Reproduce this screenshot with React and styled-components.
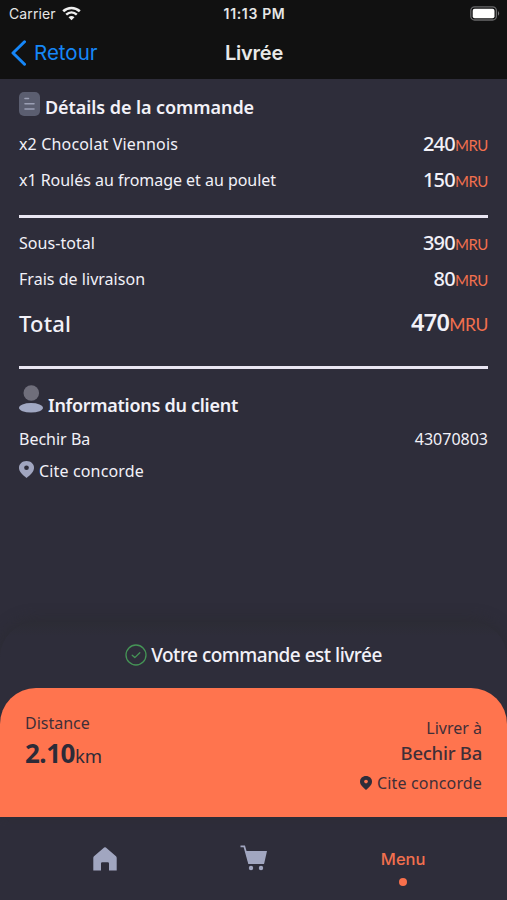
import React from "react";
import styled, { createGlobalStyle } from "styled-components";

const GlobalStyle = createGlobalStyle`
  * {
    box-sizing: border-box;
  }
  body {
    margin: 0;
    background-color: #2e2d3a;
  }
`;

const Screen = styled.div`
  width: 507px;
  height: 900px;
  display: flex;
  flex-direction: column;
  overflow: hidden;
  background-color: #2e2d3a;
  color: #f2f1f8;
  font-family: "Noto Sans", sans-serif;
`;

const Header = styled.header`
  height: 79px;
  flex-shrink: 0;
  background-color: #111111;
  font-family: Inter, sans-serif;
`;

const StatusBar = styled.div`
  height: 27px;
  padding: 0 7px 0 9px;
  display: grid;
  grid-template-columns: 1fr auto 1fr;
  align-items: center;
  font-size: 14px;
  color: #e6e6e6;
  svg {
    display: block;
  }
`;

const Carrier = styled.div`
  display: flex;
  align-items: center;
  gap: 6px;
  letter-spacing: 0.1px;
`;

const Clock = styled.span`
  font-size: 14px;
  font-weight: 600;
  letter-spacing: 0.65px;
`;

const Battery = styled.div`
  justify-self: end;
`;

const Navbar = styled.div`
  height: 51px;
  padding-left: 11px;
  display: grid;
  grid-template-columns: 1fr auto 1fr;
  align-items: center;
`;

const Back = styled.a`
  display: flex;
  align-items: center;
  gap: 8px;
  font-size: 20.5px;
  color: #1687f8;
`;

const PageTitle = styled.h1`
  margin: 0 10px 0 0;
  font-size: 20px;
  font-weight: 600;
  letter-spacing: -0.2px;
  color: #e8e8e8;
`;

const Content = styled.main`
  height: 543px;
  flex-shrink: 0;
  padding: 12px 19px 0;
`;

const SectionTitle = styled.h2`
  height: ${({ height }) => height}px;
  margin: 0 0 ${({ bottom }) => bottom || 0}px;
  display: flex;
  align-items: center;
  gap: 5px;
  svg {
    margin-bottom: ${({ lift }) => lift}px;
  }
`;

const Text = styled.span`
  font-size: ${({ size }) => size || 16}px;
  font-weight: ${({ weight }) => weight || 400};
  letter-spacing: ${({ spacing }) => spacing || 0}px;
  line-height: 1;
  white-space: nowrap;
`;

const Row = styled.div`
  height: ${({ height }) => height || 36}px;
  display: flex;
  justify-content: space-between;
  align-items: center;
`;

const Price = styled.span`
  display: flex;
  align-items: baseline;
  font-size: ${({ large }) => (large ? 23.5 : 20)}px;
  font-weight: ${({ large }) => (large ? 600 : 500)};
  letter-spacing: ${({ large }) => (large ? -0.7 : -0.8)}px;
  line-height: 1;
  small {
    font-family: Lato, sans-serif;
    font-size: ${({ large }) => (large ? 17.5 : 15)}px;
    font-weight: 400;
    letter-spacing: -0.4px;
    color: #f2704e;
  }
`;

const Divider = styled.hr`
  height: 3px;
  margin: 17px 0 ${({ bottom }) => bottom}px;
  border: 0;
  background-color: #e9e6f2;
`;

const Place = styled.div`
  height: 30px;
  display: flex;
  align-items: center;
  gap: 5px;
  svg {
    margin-bottom: ${({ lift }) => lift || 0}px;
  }
`;

const Sheet = styled.section`
  height: 195px;
  flex-shrink: 0;
  border-radius: 36px 36px 0 0;
  background: linear-gradient(#2c2c35, #2e2d3a 14px);
  box-shadow: 0 -3px 14px rgba(43, 43, 49, 0.75);
`;

const OrderStatus = styled.div`
  height: 66px;
  display: flex;
  justify-content: center;
  align-items: center;
  gap: 4px;
`;

const DeliveryCard = styled.div`
  height: 129px;
  padding: 27px 25px 0;
  display: flex;
  justify-content: space-between;
  border-radius: 36px 36px 0 0;
  background-color: #ff744e;
  color: #3f2f38;
`;

const Distance = styled.div`
  display: flex;
  flex-direction: column;
  line-height: 1;
  gap: 9px;
`;

const DistanceValue = styled.div`
  display: flex;
  align-items: baseline;
  line-height: 1;
  color: #2c2b38;
`;

const Recipient = styled.div`
  padding-top: 5px;
  display: flex;
  flex-direction: column;
  align-items: flex-end;
  line-height: 1;
`;

const RecipientName = styled.div`
  margin: 8px 0 5px;
`;

const TabBar = styled.nav`
  height: 83px;
  flex-shrink: 0;
  padding: 0 29px;
  display: grid;
  grid-template-columns: repeat(3, 1fr);
`;

const Tab = styled.div`
  padding-top: ${({ top }) => top}px;
  display: flex;
  flex-direction: column;
  align-items: center;
  font-family: Inter, sans-serif;
  font-size: 16.5px;
  font-weight: 500;
  line-height: 20px;
  color: #f2704e;
  svg {
    margin-left: 2px;
  }
`;

const ActiveDot = styled.i`
  width: 8px;
  height: 8px;
  margin-top: 9px;
  border-radius: 50%;
  background-color: #f8704c;
`;

const WifiIcon = () => (
  <svg width="19" height="15" viewBox="0 0 19 15" fill="none">
    <path d="M1.2 5.3C6 .8 13 .8 17.8 5.3" stroke="#f0f0f0" strokeWidth="2.6" />
    <path d="M4.2 8.6C7.4 5.7 11.6 5.7 14.8 8.6" stroke="#f0f0f0" strokeWidth="2.5" />
    <path d="M6.5 11.2Q9.5 8.7 12.5 11.2L9.5 14.2Z" fill="#f0f0f0" />
  </svg>
);

const BatteryIcon = () => (
  <svg width="30" height="15" viewBox="0 0 30 15" fill="none">
    <rect x="0.8" y="0.8" width="25.6" height="13.2" rx="3.8" stroke="#68686a" strokeWidth="1.3" />
    <rect x="2.7" y="2.7" width="21.8" height="9.5" rx="2" fill="#fff" />
    <path d="M28 5Q30.3 7.4 28 9.8Z" fill="#77777a" />
  </svg>
);

const BackIcon = () => (
  <svg width="15" height="26" viewBox="0 0 15 26" fill="none">
    <path d="M13.5 1.8L2 13L13.5 24.2" stroke="#1687f8" strokeWidth="3" strokeLinecap="round" strokeLinejoin="round" />
  </svg>
);

const DocumentIcon = () => (
  <svg width="21" height="24" viewBox="0 0 21 24" fill="none">
    <rect width="21" height="24" rx="5" fill="#5b5e70" />
    <path d="M6 6.5H9.5M6 11.7H15M6 17H15" stroke="#9b9fb4" strokeWidth="1.6" strokeLinecap="round" />
  </svg>
);

const UserIcon = () => (
  <svg width="24" height="28" viewBox="0 0 24 28">
    <circle cx="12.3" cy="8" r="7.8" fill="#6f6e7b" />
    <ellipse cx="12" cy="22.8" rx="12" ry="4.8" fill="#a1a8c3" />
  </svg>
);

const PinIcon = ({ width, height, color, hole }) => (
  <svg width={width} height={height} viewBox="0 0 14 17" preserveAspectRatio="none">
    <path d="M7 0C3 0 0 2.8 0 6.8C0 11 3.5 14.1 7 17C10.5 14.1 14 11 14 6.8C14 2.8 11 0 7 0Z" fill={color} />
    <circle cx="7" cy="6.8" r="2.2" fill={hole} />
  </svg>
);

const CheckIcon = () => (
  <svg width="22" height="22" viewBox="0 0 22 22" fill="none" stroke="#459456" strokeWidth="1.3">
    <circle cx="11" cy="11" r="10" />
    <path d="M7.2 11.3L9.8 13.6L14.8 8.7" strokeLinecap="round" strokeLinejoin="round" />
  </svg>
);

const HomeIcon = () => (
  <svg width="24" height="24" viewBox="0 0 24 24">
    <path d="M12 .3Q12.8.3 14 1.4L23 9.3Q23.7 10 23.7 11V23.6H16V16.5Q16 15.3 14.8 15.3H9.2Q8 15.3 8 16.5V23.6H.3V11Q.3 10 1 9.3L10 1.4Q11.2.3 12 .3Z" fill="#a1a6c0" />
  </svg>
);

const CartIcon = () => (
  <svg width="28" height="26" viewBox="0 0 28 26" fill="none">
    <path d="M.5 1.3H4.3L9 18.2H24" stroke="#a1a6c0" strokeWidth="1.8" />
    <path d="M5.5 6H27L24.2 18.4H8.6Z" fill="#a1a6c0" />
    <circle cx="11" cy="23" r="2.2" fill="#a1a6c0" />
    <circle cx="21" cy="23" r="2.2" fill="#a1a6c0" />
  </svg>
);

const items = [
  { label: "x2 Chocolat Viennois", price: 240, spacing: 0.16 },
  { label: "x1 Roulés au fromage et au poulet", price: 150, spacing: -0.03 }
];

const fees = [
  { label: "Sous-total", price: 390, spacing: 0.05 },
  { label: "Frais de livraison", price: 80, spacing: 0.03 }
];

const PriceRow = ({ label, price, spacing }) => (
  <Row>
    <Text spacing={spacing}>{label}</Text>
    <Price>
      {price}
      <small>MRU</small>
    </Price>
  </Row>
);

export default function App() {
  return (
    <Screen>
      <GlobalStyle />
      <Header>
        <StatusBar>
          <Carrier>
            Carrier
            <WifiIcon />
          </Carrier>
          <Clock>11:13 PM</Clock>
          <Battery>
            <BatteryIcon />
          </Battery>
        </StatusBar>
        <Navbar>
          <Back>
            <BackIcon />
            Retour
          </Back>
          <PageTitle>Livrée</PageTitle>
        </Navbar>
      </Header>
      <Content>
        <SectionTitle height={32} bottom={3} lift={6}>
          <DocumentIcon />
          <Text size={18} weight={600} spacing={-0.07}>Détails de la commande</Text>
        </SectionTitle>
        {items.map(item => (
          <PriceRow key={item.label} {...item} />
        ))}
        <Divider bottom={7} />
        {fees.map(item => (
          <PriceRow key={item.label} {...item} />
        ))}
        <Row height={52}>
          <Text size={22} weight={500} spacing={0.2}>Total</Text>
          <Price large>
            470
            <small>MRU</small>
          </Price>
        </Row>
        <Divider bottom={19} />
        <SectionTitle height={34} lift={13}>
          <UserIcon />
          <Text size={18} weight={600} spacing={-0.28}>Informations du client</Text>
        </SectionTitle>
        <Row height={34}>
          <Text>Bechir Ba</Text>
          <Text>43070803</Text>
        </Row>
        <Place lift={4}>
          <PinIcon width={15} height={17} color="#a1a6c0" hole="#2e2d3a" />
          <Text spacing={0.15}>Cite concorde</Text>
        </Place>
      </Content>
      <Sheet>
        <OrderStatus>
          <CheckIcon />
          <Text size={19} weight={500} spacing={-0.5}>Votre commande est livrée</Text>
        </OrderStatus>
        <DeliveryCard>
          <Distance>
            <Text>Distance</Text>
            <DistanceValue>
              <Text size={26} weight={700} spacing={-0.5}>2.10</Text>
              <Text size={18.5}>km</Text>
            </DistanceValue>
          </Distance>
          <Recipient>
            <Text>Livrer à</Text>
            <RecipientName>
              <Text size={18.5} weight={500} spacing={-0.25}>Bechir Ba</Text>
            </RecipientName>
            <Place>
              <PinIcon width={12} height={14} color="#2e2d3a" hole="#ff744e" />
              <Text spacing={0.15}>Cite concorde</Text>
            </Place>
          </Recipient>
        </DeliveryCard>
      </Sheet>
      <TabBar>
        <Tab top={30}>
          <HomeIcon />
        </Tab>
        <Tab top={28}>
          <CartIcon />
        </Tab>
        <Tab top={32}>
          Menu
          <ActiveDot />
        </Tab>
      </TabBar>
    </Screen>
  );
}
